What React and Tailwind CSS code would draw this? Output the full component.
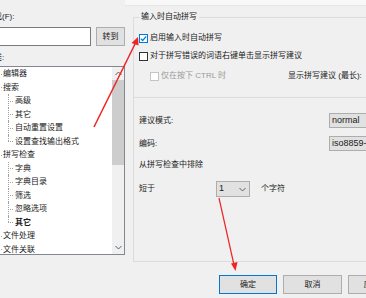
import React from "react";

const Chevron = ({ up, className }) => (
  <svg width="7" height="5" viewBox="0 0 7 5" className={className}>
    <polyline
      points={up ? "0.5,4 3.5,1 6.5,4" : "0.5,1 3.5,4 6.5,1"}
      fill="none"
      stroke="#606060"
      strokeWidth="1"
    />
  </svg>
);

const Check = ({ checked, disabled }) => (
  <span
    className={
      "relative flex h-[9px] w-[9px] shrink-0 items-center justify-center border bg-white " +
      (checked
        ? "border-[#0078d7]"
        : disabled
        ? "border-[#c4c4c4]"
        : "border-[#333333]")
    }
  >
    {checked && (
      <svg width="7" height="7" viewBox="0 0 7 7">
        <polyline points="0.8,3.6 2.7,5.5 6.2,1.4" fill="none" stroke="#0078d7" strokeWidth="1.2" />
      </svg>
    )}
  </span>
);

function TopRow({ text }) {
  return (
    <div className="flex h-[13.5px] items-center">
      <span className="relative h-full w-[6px] shrink-0">
        <span className="absolute left-[0px] top-1/2 w-[5px] border-t border-dotted border-[#a0a0a0]" />
      </span>
      <span>{text}</span>
    </div>
  );
}

function ChildRow({ text, last, bold }) {
  return (
    <div className="flex h-[13.5px] items-center">
      <span className="relative h-full w-[18px] shrink-0">
        <span
          className={
            "absolute left-[11px] top-0 border-l border-dotted border-[#a0a0a0] " +
            (last ? "h-1/2" : "h-full")
          }
        />
        <span className="absolute left-[11px] top-1/2 w-[5px] border-t border-dotted border-[#a0a0a0]" />
      </span>
      <span className={bold ? "font-bold" : ""}>{text}</span>
    </div>
  );
}

export default function App() {
  return (
    <div className="relative flex h-[298px] w-[366px] overflow-hidden bg-[#f0f0f0] font-['Liberation_Sans','Noto_Sans_CJK_SC',sans-serif] text-[8px] text-[#1a1a1a]">
      {/* Left column */}
      <div className="flex w-[125px] shrink-0 flex-col">
        <div className="mt-[12px] ml-[-14px] h-[10px] leading-[10px] whitespace-nowrap">查找(F):</div>
        <div className="mt-[5px] flex h-[19px]">
          <div className="ml-[-4px] h-[19px] w-[95px] border border-[#7a7a7a] bg-white" />
          <div className="ml-[5px] flex h-[19px] w-[29px] items-center justify-center border border-[#adadad] bg-[#e1e1e1]">
            转到
          </div>
        </div>
        <div className="mt-[7px] ml-[-6px] h-[10px] leading-[10px] whitespace-nowrap">类:</div>
        <div className="mt-[3px] ml-[-4px] flex h-[189px] w-[129px] border border-[#828790] bg-white">
          <div className="flex-1 overflow-hidden leading-[13.5px] whitespace-nowrap">
            <TopRow text="编辑器" />
            <TopRow text="搜索" />
            <ChildRow text="高级" />
            <ChildRow text="其它" />
            <ChildRow text="自动重置设置" />
            <ChildRow text="设置查找输出格式" last />
            <TopRow text="拼写检查" />
            <ChildRow text="字典" />
            <ChildRow text="字典目录" />
            <ChildRow text="筛选" />
            <ChildRow text="忽略选项" />
            <ChildRow text="其它" last bold />
            <TopRow text="文件处理" />
            <TopRow text="文件关联" />
          </div>
          <div className="flex w-[12px] shrink-0 flex-col bg-[#f0f0f0]">
            <div className="flex h-[13px] items-center justify-center">
              <Chevron up />
            </div>
            <div className="h-[85px] bg-[#cdcdcd]" />
            <div className="flex-1" />
            <div className="flex h-[13px] items-center justify-center">
              <Chevron />
            </div>
          </div>
        </div>
      </div>

      {/* Right column */}
      <div className="flex min-w-0 flex-1 flex-col">
        <div className="h-[6px] border-b border-[#e6e6e6] bg-[#f8f8f8]" />
        <div className="ml-[8px] flex flex-col">
          <fieldset className="mt-[5px] h-[251px] w-[240px] border border-[#dcdcdc] pl-[5px]">
            <legend className="px-[2px] leading-[12px]">输入时自动拼写</legend>
            <div className="mt-[10px] flex h-[10px] items-center gap-[2px] whitespace-nowrap">
              <Check checked />
              <span>启用输入时自动拼写</span>
            </div>
            <div className="mt-[8px] flex h-[10px] items-center gap-[2px] whitespace-nowrap">
              <Check />
              <span>对于拼写错误的词语右键单击显示拼写建议</span>
            </div>
            <div className="mt-[10px] flex h-[10px] items-center whitespace-nowrap">
              <span className="ml-[11px] flex items-center gap-[2px] text-[#9a9a9a]">
                <Check disabled />
                <span>仅在按下 CTRL 时</span>
              </span>
              <span className="ml-[62px]">显示拼写建议 (最长):</span>
            </div>
            <div className="mt-[16px] ml-[-5px] border-t border-[#dcdcdc]" />
            <div className="mt-[15px] flex h-[15px] items-center whitespace-nowrap">
              <span className="w-[190px]">建议模式:</span>
              <div className="flex h-[15px] w-[50px] items-center border border-[#adadad] bg-[#e1e1e1] pl-[2px] text-[9px]">
                normal
              </div>
            </div>
            <div className="mt-[8px] flex h-[15px] items-center whitespace-nowrap">
              <span className="w-[190px]">编码:</span>
              <div className="flex h-[15px] w-[50px] items-center border border-[#adadad] bg-[#e1e1e1] pl-[2px] text-[9px]">
                iso8859-1
              </div>
            </div>
            <div className="mt-[9px] flex h-[10px] items-center whitespace-nowrap">从拼写检查中排除</div>
            <div className="mt-[11px] flex h-[16px] items-center whitespace-nowrap">
              <span className="w-[77px]">短于</span>
              <div className="flex h-[16px] w-[34px] items-center justify-between border border-[#adadad] bg-[#e1e1e1] pl-[2px] pr-[3px] text-[9px]">
                <span>1</span>
                <Chevron />
              </div>
              <span className="ml-[11px]">个字符</span>
            </div>
          </fieldset>
          <div className="mt-[13px] ml-[86px] flex gap-[6px] whitespace-nowrap">
            <div className="flex h-[19px] w-[58px] shrink-0 items-center justify-center border border-[#0078d7] bg-[#e1e1e1]">
              确定
            </div>
            <div className="flex h-[19px] w-[59px] shrink-0 items-center justify-center border border-[#adadad] bg-[#e1e1e1]">
              取消
            </div>
            <div className="flex h-[19px] w-[58px] shrink-0 items-center justify-center border border-[#adadad] bg-[#e1e1e1]">
              应用(A)
            </div>
          </div>
        </div>
      </div>

      {/* Annotation arrows */}
      <svg className="pointer-events-none absolute left-0 top-0" width="366" height="298" viewBox="0 0 366 298">
        <line x1="94" y1="127" x2="136" y2="42" stroke="#ee2424" strokeWidth="1.5" />
        <polygon points="138,37 131.5,43 138.5,45.5" fill="#ee2424" />
        <line x1="219" y1="198" x2="234" y2="265" stroke="#ee2424" strokeWidth="1.2" />
        <polygon points="235.5,271 231,263.5 237.5,262" fill="#ee2424" />
      </svg>
    </div>
  );
}
